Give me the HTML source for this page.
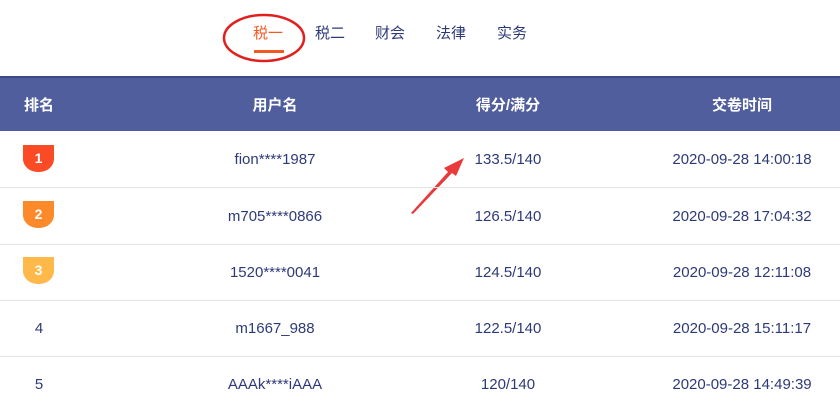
<!DOCTYPE html>
<html><head><meta charset="utf-8"><style>
body{margin:0;width:840px;height:403px;overflow:hidden;background:#fff;font-family:"Liberation Sans","Noto Sans CJK SC",sans-serif;position:relative}
.tab{position:absolute;top:22px;font-size:15px;color:#2e3a78}
.hdr{position:absolute;top:76px;left:0;width:840px;height:55px;background:#505e9e;border-top:2px solid #3d4a88;box-sizing:border-box}
.h{position:absolute;top:94px;color:#fff;font-weight:bold;font-size:15px;transform:translateX(-50%);white-space:nowrap}
.row{position:absolute;left:0;width:840px;border-bottom:1px solid #e3e3e3}
.c{position:absolute;font-size:15px;color:#2e3a78;transform:translateX(-50%);white-space:nowrap}
.b{position:absolute;left:23px;width:31px;height:27px;border-radius:0 0 15px 15px/0 0 13px 13px;color:#fff;font-weight:bold;font-size:14px;text-align:center;line-height:27px}
</style></head><body>
<div class="tab" style="left:253px;color:#f05a22">税一</div>
<div style="position:absolute;left:254px;top:50px;width:30px;height:3px;background:#f05a22"></div>
<div class="tab" style="left:315px">税二</div>
<div class="tab" style="left:375px">财会</div>
<div class="tab" style="left:436px">法律</div>
<div class="tab" style="left:497px">实务</div>
<svg style="position:absolute;left:0;top:0" width="840" height="403">
<ellipse cx="264" cy="38" rx="40" ry="23" fill="none" stroke="#e02020" stroke-width="2.5"/>
<polygon points="411,213 448,172 444,168 464,158 456,176 452,173 413,214" fill="#e83a3a"/>
</svg>
<div class="hdr"></div>
<div class="h" style="left:39px">排名</div>
<div class="h" style="left:275px">用户名</div>
<div class="h" style="left:508px">得分/满分</div>
<div class="h" style="left:742px">交卷时间</div>
<div class="row" style="top:131px;height:56px"></div>
<div class="row" style="top:188px;height:56px"></div>
<div class="row" style="top:245px;height:55px"></div>
<div class="row" style="top:301px;height:55px"></div>
<div class="b" style="top:145px;background:#fb4a26">1</div>
<div class="b" style="top:201px;background:#fd8a2a">2</div>
<div class="b" style="top:257px;background:#ffb84a">3</div>
<div class="c" style="left:39px;top:320px">4</div>
<div class="c" style="left:39px;top:376px">5</div>
<div class="c" style="left:275px;top:151px">fion****1987</div>
<div class="c" style="left:275px;top:208px">m705****0866</div>
<div class="c" style="left:275px;top:264px">1520****0041</div>
<div class="c" style="left:275px;top:320px">m1667_988</div>
<div class="c" style="left:275px;top:376px">AAAk****iAAA</div>
<div class="c" style="left:508px;top:151px">133.5/140</div>
<div class="c" style="left:508px;top:208px">126.5/140</div>
<div class="c" style="left:508px;top:264px">124.5/140</div>
<div class="c" style="left:508px;top:320px">122.5/140</div>
<div class="c" style="left:508px;top:376px">120/140</div>
<div class="c" style="left:742px;top:151px">2020-09-28 14:00:18</div>
<div class="c" style="left:742px;top:208px">2020-09-28 17:04:32</div>
<div class="c" style="left:742px;top:264px">2020-09-28 12:11:08</div>
<div class="c" style="left:742px;top:320px">2020-09-28 15:11:17</div>
<div class="c" style="left:742px;top:376px">2020-09-28 14:49:39</div>
</body></html>
